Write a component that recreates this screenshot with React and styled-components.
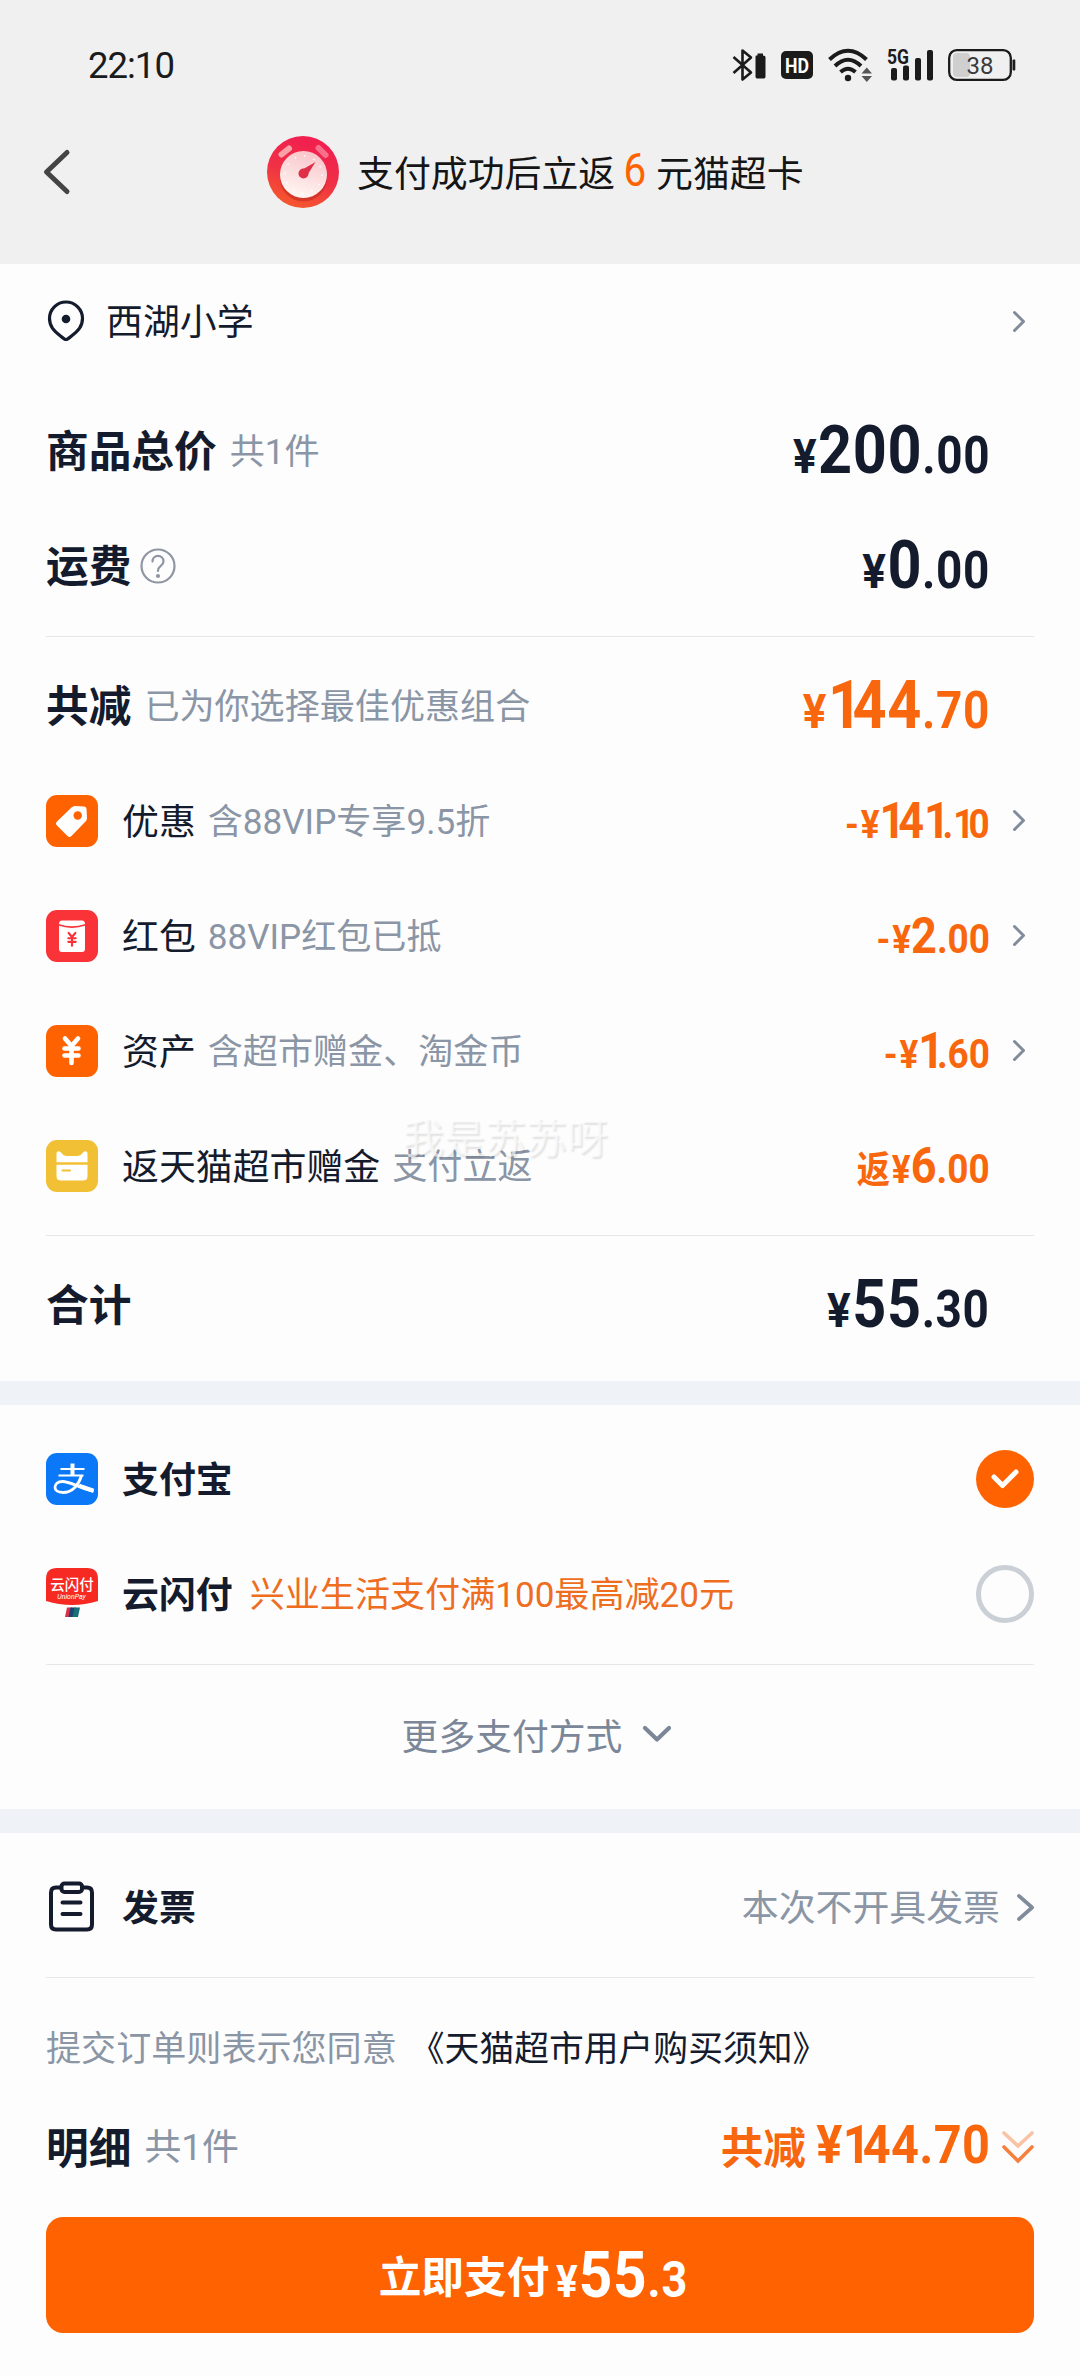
import React from "react";
import styled, { createGlobalStyle } from "styled-components";

const C = {
  ink: "#141b2d",
  grey: "#8a95a5",
  orange: "#f8670d",
  brand: "#ff6200",
  line: "#e6e7ea",
  band: "#eff3f7",
};

const GlobalStyle = createGlobalStyle`
  * { box-sizing: border-box; }
  body {
    margin: 0;
    background: #fdfdfd;
    font-family: Roboto, "Noto Sans CJK SC", sans-serif;
    color: ${C.ink};
  }
  svg { display: block; flex: none; overflow: visible; }
`;

const Page = styled.div`
  position: relative;
  width: 1080px;
  height: 2376px;
  overflow: hidden;
  background: #fdfdfd;
`;

const Header = styled.header`
  height: 264px;
  background: #f0f0f1;
`;

const StatusBar = styled.div`
  display: flex;
  align-items: center;
  justify-content: space-between;
  height: 128px;
  padding: 2px 64px 0 88px;
`;

const Clock = styled.div`
  font-size: 36.5px;
  letter-spacing: -1px;
  color: #1b1b1b;
  line-height: 40px;
  padding-top: 1px;
`;

const StatusIcons = styled.div`
  display: flex;
  align-items: center;
  gap: 15px;
`;

const TitleBar = styled.div`
  display: flex;
  align-items: center;
  height: 88px;
  padding-left: 42px;
`;

const TitleContent = styled.div`
  display: flex;
  align-items: center;
  margin-left: 196px;
  gap: 18px;
`;

const TitleText = styled.div`
  font-size: 36.9px;
  line-height: 60px;
  color: #151515;
  white-space: nowrap;
  padding-top: 6px;
`;

const TitleNumber = styled.span`
  display: inline-block;
  font-size: 46px;
  font-weight: 400;
  line-height: 40px;
  color: ${C.brand};
  transform: scaleX(0.88) translateY(-1px);
  margin: 0 8px 0 7px;
`;

const Section = styled.section`
  padding: ${(p) => p.$pad || "0"} 46px 0;
  height: ${(p) => p.$height}px;
`;

const Band = styled.div`
  height: 24px;
  background: ${C.band};
`;

const Divider = styled.hr`
  height: 1px;
  margin: ${(p) => p.$gap || "0"};
  border: 0;
  background: ${C.line};
`;

const AddressRow = styled.div`
  display: flex;
  align-items: center;
  height: 114px;
  margin-bottom: 15px;
`;

const Row = styled.div`
  display: flex;
  align-items: center;
  height: ${(p) => p.$height || 115}px;
  padding-top: ${(p) => p.$drop || 0}px;
`;

const IconBox = styled.div`
  flex: none;
  width: ${(p) => p.$width || 76}px;
`;

const HelpBox = styled.div`
  flex: none;
  padding-left: 9px;
`;

const Label = styled.span`
  font-size: ${(p) => (p.$big ? 42.7 : 36.9)}px;
  font-weight: ${(p) => (p.$bold ? 700 : 400)};
  line-height: 52px;
  padding-top: ${(p) => (p.$big ? 3 : 4)}px;
  color: ${(p) => p.$color || C.ink};
  white-space: nowrap;
`;

const Note = styled.span`
  font-size: ${(p) => p.$size || 35.1}px;
  line-height: 52px;
  padding-top: 2px;
  margin-left: ${(p) => p.$gap ?? 13}px;
  color: ${(p) => p.$color || C.grey};
  white-space: nowrap;
`;

const Spacer = styled.div`
  flex: 1;
`;

const AmountBox = styled.div`
  display: flex;
  flex: none;
  justify-content: ${(p) => (p.$start ? "flex-start" : "flex-end")};
  width: ${(p) => (p.$width ? `${p.$width}px` : "auto")};
  padding-left: ${(p) => p.$inset || 0}px;
  margin-top: ${(p) => p.$lift || 0}px;
`;

const Amount = styled.div`
  flex: none;
  font-size: ${(p) => p.$size}px;
  font-weight: 700;
  line-height: 60px;
  letter-spacing: ${(p) => p.$tracking || 0}px;
  color: ${(p) => p.$color || C.ink};
  white-space: nowrap;
  transform: scaleX(0.9);
  transform-origin: ${(p) => (p.$start ? "left" : "right")} center;
`;

const Part = styled.span`
  font-size: ${(p) => p.$size}px;
  line-height: 1;
  margin-right: ${(p) => p.$gap || 0}px;
`;

const NarrowOne = styled.span`
  letter-spacing: -0.16em;
`;

const Trailing = styled.div`
  flex: none;
  display: flex;
  justify-content: flex-end;
  width: ${(p) => p.$width || 44}px;
  padding-right: ${(p) => p.$inset ?? 9}px;
`;

const Radio = styled.div`
  display: grid;
  place-items: center;
  width: 58px;
  height: 58px;
  border-radius: 50%;
  border: ${(p) => (p.$checked ? "0" : "5px solid #cbd0d7")};
  background: ${(p) => (p.$checked ? C.brand : "transparent")};
`;

const More = styled.div`
  display: flex;
  align-items: center;
  justify-content: center;
  gap: 20px;
  height: 138px;
  padding-right: 6px;
  font-size: 36.8px;
  color: #7b8798;
`;

const PayButton = styled.button`
  display: flex;
  align-items: center;
  justify-content: center;
  width: 100%;
  height: 116px;
  margin-top: 41px;
  padding: 2px 0 0;
  border: 0;
  border-radius: 17px;
  background: ${C.brand};
  color: #fff;
  font-family: inherit;
`;

const Watermark = styled.div`
  position: absolute;
  left: 403px;
  top: 1109px;
  font-size: 41px;
  line-height: 60px;
  color: rgba(255, 255, 255, 0.65);
  text-shadow: 1.5px 1.5px 2px rgba(0, 0, 0, 0.11);
`;

function Chevron({ w = 12, h = 21, stroke = 3, color = "#808b9b" }) {
  const s = stroke / 2;
  return (
    <svg width={w} height={h} viewBox={`0 0 ${w} ${h}`} fill="none">
      <path d={`M${s} ${s}L${w - s} ${h / 2}L${s} ${h - s}`} stroke={color} strokeWidth={stroke} strokeLinecap="round" strokeLinejoin="round" />
    </svg>
  );
}

const BackArrow = () => (
  <svg width="29" height="46" viewBox="0 0 29 46" fill="none">
    <path d="M25 3.500L4.500 23L25 42.500" stroke="#444" strokeWidth="5" strokeLinecap="round" strokeLinejoin="round" />
  </svg>
);

function Tile({ color, children }) {
  return (
    <svg width="52" height="52" viewBox="0 0 52 52">
      <rect width="52" height="52" rx="11" fill={color} />
      {children}
    </svg>
  );
}

const Yuan = ({ x, y, s, w, color }) => (
  <g transform={`translate(${x} ${y}) scale(${s})`} stroke={color} strokeWidth={w} strokeLinecap="round" strokeLinejoin="round" fill="none">
    <path d="M-6.500-11.500L0-4L6.500-11.500M0-4V13M-7-1.500H7M-7 5.500H7" />
  </g>
);

const TagIcon = () => (
  <Tile color={C.brand}>
    <path d="M25.500 12.500Q27 11 29 11L38 11.500Q40.500 11.500 40.500 14L41 23Q41 25 39.500 26.500L25.500 41Q23.500 43 21.500 41L11 30.500Q9 28.500 11 26.500Z" fill="#fff" />
    <circle cx="31.700" cy="20.500" r="4.200" fill={C.brand} />
  </Tile>
);

const RedPacketIcon = () => (
  <Tile color="#fa3338">
    <path d="M13 14Q13 10.500 16 10.500H36Q39 10.500 39 14V38.500Q39 42 36 42H16Q13 42 13 38.500Z" fill="#fff" />
    <path d="M12.500 14.800Q26 19.500 39.500 14.800" stroke="#fa3338" strokeWidth="1.600" fill="none" />
    <Yuan x={26} y={29} s={0.52} w={4.2} color="#fa3338" />
  </Tile>
);

const AssetIcon = () => (
  <Tile color={C.brand}>
    <Yuan x={25.5} y={25} s={1} w={4.6} color="#fff" />
  </Tile>
);

const CatCardIcon = () => (
  <Tile color="#f2c035">
    <path d="M10.500 22.300V14C10.500 10.500 13 10.500 15 12.500Q17.500 16 20 16H32Q34.500 16 37 12.500C39 10.500 41.500 10.500 41.500 14V22.300Z" fill="#fff" />
    <path d="M10.500 24.700H41.500V36Q41.500 40.500 37 40.500H15Q10.500 40.500 10.500 36Z" fill="#fff" />
    <path d="M16.500 30.500H24" stroke="#f2c035" strokeWidth="2.200" strokeLinecap="round" />
  </Tile>
);

const AlipayIcon = () => (
  <Tile color="#0b78f8">
    <g fill="none" stroke="#fff">
      <path d="M14.500 16H38.500M12.500 22.500H37.500" strokeWidth="2.200" />
      <path d="M26.500 10.500V22.500" strokeWidth="4" />
      <path d="M35.500 22.500C33 31 27 39.500 17 39.500C11.500 39.500 9 37 9 34.500C9 31 12 28.500 16.500 28.500C24 28.500 30 33.500 47.500 38.500" strokeWidth="2.800" />
      <path d="M33 32.800L47.500 37.700" strokeWidth="4.200" />
    </g>
  </Tile>
);

const UnionPayIcon = () => (
  <svg width="52" height="52" viewBox="0 0 52 52">
    <path d="M0 11Q0 0 11 0H41Q52 0 52 11V33Q26 41 0 33Z" fill="#f62a22" />
    <text x="26" y="22" textAnchor="middle" fontSize="14.500" fontWeight="500" fill="#fff">云闪付</text>
    <text x="25.500" y="31" textAnchor="middle" fontSize="7" fontStyle="italic" fill="#fff">UnionPay</text>
    <path d="M21 39.500H26.500L24.500 49H19Z" fill="#d8304a" />
    <path d="M24.500 39.500H30L28 49H22.500Z" fill="#1c4470" />
    <path d="M28.500 39.500H34L32 49H26.500Z" fill="#177077" />
  </svg>
);

const ClipboardIcon = () => (
  <svg width="52" height="52" viewBox="0 0 52 52" fill="none" stroke={C.ink} strokeWidth="4" strokeLinecap="round" strokeLinejoin="round">
    <path d="M14 6.500H10Q5 6.500 5 11.500V43.500Q5 48.500 10 48.500H41Q46 48.500 46 43.500V11.500Q46 6.500 41 6.500H37" />
    <rect x="15.500" y="2.500" width="20.500" height="8.500" rx="3" />
    <path d="M16.500 21.500H34.500M16.500 33H34.500" />
  </svg>
);

const PinIcon = () => (
  <svg width="40" height="42" viewBox="0 0 40 42">
    <path d="M20 39.500Q18.500 39.500 14.500 36C8 31 3.500 26.500 3.500 18.500A16.500 16.500 0 0 1 36.500 18.500C36.500 26.500 32 31 25.500 36Q21.500 39.500 20 39.500Z" fill="none" stroke={C.ink} strokeWidth="3.200" />
    <circle cx="20" cy="19" r="4.300" fill={C.ink} />
  </svg>
);

const HelpIcon = () => (
  <svg width="36" height="36" viewBox="0 0 36 36" fill="none" stroke="#8f96a2" strokeWidth="2.200" strokeLinecap="round">
    <circle cx="18" cy="18" r="16.500" />
    <path d="M12.500 13.500C12.500 6 23.500 6 23.500 13.500C23.500 18 18 17.500 18 23" />
    <circle cx="18" cy="28" r="1" fill="#8f96a2" />
  </svg>
);

const TimerBadge = () => (
  <svg width="72" height="72" viewBox="0 0 72 72">
    <defs>
      <linearGradient id="ring" x1="0.650" y1="0.100" x2="0.350" y2="1">
        <stop offset="0" stopColor="#f0204f" />
        <stop offset="0.500" stopColor="#f03145" />
        <stop offset="1" stopColor="#f5592c" />
      </linearGradient>
      <linearGradient id="dial" x1="0.700" y1="0" x2="0.400" y2="1">
        <stop offset="0" stopColor="#f9c3c9" />
        <stop offset="1" stopColor="#fff7f3" />
      </linearGradient>
    </defs>
    <circle cx="36" cy="36" r="36" fill="url(#ring)" />
    <circle cx="36.500" cy="42" r="23.500" fill="#b82318" opacity="0.500" />
    <circle cx="36.500" cy="38.500" r="23.500" fill="url(#dial)" />
    <circle cx="36.500" cy="38.500" r="18.500" fill="none" stroke="#fff" strokeWidth="1.500" strokeDasharray="1.500 8.200" />
    <path d="M14.500 18.500L22 12.500" stroke="#fba1a8" strokeWidth="6" strokeLinecap="round" />
    <path d="M51.500 12L58.500 19" stroke="#f8708a" strokeWidth="6" strokeLinecap="round" />
    <circle cx="36.500" cy="37.500" r="5" fill="#e03048" />
    <path d="M48.500 26L41 38L35.500 33.500Z" fill="#e03048" />
  </svg>
);

const BluetoothIcon = () => (
  <svg width="34" height="34" viewBox="0 0 34 34" fill="none" stroke="#1b1b1b" strokeWidth="2.600">
    <path d="M1.500 9L19 24.500L10.500 31.500V2.500L19 9.500L1.500 25" strokeLinejoin="round" />
    <path d="M24 7.500H25.500V5.500H31V7.500Q33.500 7.500 33.500 9V28.500Q33.500 30.500 32 30.500H25Q23.500 30.500 23.500 28.500V9Q23.500 7.500 24 7.500Z" fill="#1b1b1b" stroke="none" />
  </svg>
);

const HdIcon = () => (
  <svg width="32" height="28" viewBox="0 0 32 28">
    <rect width="32" height="28" rx="5" fill="#1b1b1b" />
    <text x="16" y="21.500" textAnchor="middle" fontSize="21" fontWeight="700" textLength="24" lengthAdjust="spacingAndGlyphs" fill="#fff">HD</text>
  </svg>
);

const WifiIcon = () => (
  <svg width="44" height="34" viewBox="0 0 44 34" fill="none" stroke="#1b1b1b" strokeWidth="4">
    <path d="M1.500 11.500Q20 -6 38.500 11.500M7 18Q20 5.500 33 18M12.500 24Q20 17.500 27.500 24" />
    <circle cx="20" cy="30" r="3.200" fill="#1b1b1b" stroke="none" />
    <path d="M33.500 25.500L38.800 19.500L44 25.500ZM33.500 28L38.800 34L44 28Z" fill="#555" stroke="none" />
  </svg>
);

const SignalIcon = () => (
  <svg width="46" height="34" viewBox="0 0 46 34" fill="#1b1b1b">
    <text x="0" y="16" fontSize="20" fontWeight="700" textLength="22" lengthAdjust="spacingAndGlyphs">5G</text>
    <rect x="4" y="20" width="6" height="12.500" rx="2" />
    <rect x="16" y="17.500" width="6" height="15" rx="2" />
    <rect x="28" y="10" width="6" height="22.500" rx="2" />
    <rect x="40" y="2" width="6" height="30.500" rx="2" />
  </svg>
);

const BatteryIcon = () => (
  <svg width="68" height="32" viewBox="0 0 68 32">
    <rect x="5" y="4" width="17" height="24" rx="4" fill="#cfcfcf" />
    <rect x="1.200" y="1.200" width="61.600" height="29.600" rx="7.500" fill="none" stroke="#1b1b1b" strokeWidth="2.300" />
    <rect x="64.500" y="10.500" width="2.800" height="11" rx="1" fill="#1b1b1b" />
    <text x="32" y="24.500" textAnchor="middle" fontSize="24" fill="#3a3a3a">38</text>
  </svg>
);

const DoubleDown = () => (
  <svg width="32" height="34" viewBox="0 0 32 34" fill="none" strokeWidth="3.600" strokeLinecap="round">
    <path d="M2 3L16 16L30 3" stroke="#fbc3a5" />
    <path d="M2 17L16 31L30 17" stroke="#f5803f" />
  </svg>
);

/* The digit 1 is set tighter than the tabular width of the other digits. */
function Digits({ children }) {
  return children.split(/(1)/).map((part, i) => (part === "1" ? <NarrowOne key={i}>1</NarrowOne> : part));
}

function BigPrice({ whole, cents, color }) {
  return (
    <AmountBox>
      <Amount $size={66} $tracking={0.7} $color={color}>
        <Part $size={49} $gap={1}>¥</Part>
        <Digits>{whole}</Digits>
        <Part $size={51}><Digits>{`.${cents}`}</Digits></Part>
      </Amount>
    </AmountBox>
  );
}

function SmallPrice({ prefix, whole, cents }) {
  return (
    <AmountBox>
      <Amount $size={50} $color={C.orange}>
        <Part $size={prefix === "返" ? 37 : 39} $gap={2}>{prefix}</Part>
        <Part $size={39}>¥</Part>
        <Digits>{whole}</Digits>
        <Part $size={41}><Digits>{`.${cents}`}</Digits></Part>
      </Amount>
    </AmountBox>
  );
}

const savings = [
  { icon: <TagIcon />, label: "优惠", note: "含88VIP专享9.5折", prefix: "-", whole: "141", cents: "10", link: true },
  { icon: <RedPacketIcon />, label: "红包", note: "88VIP红包已抵", prefix: "-", whole: "2", cents: "00", link: true },
  { icon: <AssetIcon />, label: "资产", note: "含超市赠金、淘金币", prefix: "-", whole: "1", cents: "60", link: true },
  { icon: <CatCardIcon />, label: "返天猫超市赠金", note: "支付立返", prefix: "返", whole: "6", cents: "00", link: false },
];

export default function App() {
  return (
    <Page>
      <GlobalStyle />
      <Header>
        <StatusBar>
          <Clock>22:10</Clock>
          <StatusIcons>
            <BluetoothIcon />
            <HdIcon />
            <WifiIcon />
            <SignalIcon />
            <BatteryIcon />
          </StatusIcons>
        </StatusBar>
        <TitleBar>
          <BackArrow />
          <TitleContent>
            <TimerBadge />
            <TitleText>
              支付成功后立返<TitleNumber>6</TitleNumber>元猫超卡
            </TitleText>
          </TitleContent>
        </TitleBar>
      </Header>

      <Section $height={1117}>
        <AddressRow>
          <IconBox $width={60}><PinIcon /></IconBox>
          <Label>西湖小学</Label>
          <Spacer />
          <Trailing><Chevron /></Trailing>
        </AddressRow>
        <Row>
          <Label $big $bold>商品总价</Label>
          <Note>共1件</Note>
          <Spacer />
          <BigPrice whole="200" cents="00" />
          <Trailing />
        </Row>
        <Row>
          <Label $big $bold>运费</Label>
          <HelpBox><HelpIcon /></HelpBox>
          <Spacer />
          <BigPrice whole="0" cents="00" />
          <Trailing />
        </Row>
        <Divider $gap="13px 0 11px" />
        <Row>
          <Label $big $bold>共减</Label>
          <Note>已为你选择最佳优惠组合</Note>
          <Spacer />
          <BigPrice whole="144" cents="70" color={C.orange} />
          <Trailing />
        </Row>
        {savings.map((s) => (
          <Row key={s.label}>
            <IconBox>{s.icon}</IconBox>
            <Label>{s.label}</Label>
            <Note $gap={12}>{s.note}</Note>
            <Spacer />
            <SmallPrice prefix={s.prefix} whole={s.whole} cents={s.cents} />
            <Trailing>{s.link && <Chevron />}</Trailing>
          </Row>
        ))}
        <Divider $gap="12px 0 11px" />
        <Row>
          <Label $big $bold>合计</Label>
          <Spacer />
          <BigPrice whole="55" cents="30" />
          <Trailing />
        </Row>
      </Section>

      <Band />

      <Section $height={404} $pad="16px">
        <Row>
          <IconBox><AlipayIcon /></IconBox>
          <Label $bold>支付宝</Label>
          <Spacer />
          <Radio $checked>
            <svg width="28" height="20" viewBox="0 0 28 20" fill="none">
              <path d="M3 8L11.500 16.500L25 3" stroke="#fff" strokeWidth="5" strokeLinecap="round" strokeLinejoin="round" />
            </svg>
          </Radio>
        </Row>
        <Row>
          <IconBox><UnionPayIcon /></IconBox>
          <Label $bold>云闪付</Label>
          <Note $color="#ee6d1f" $gap={17}>兴业生活支付满100最高减20元</Note>
          <Spacer />
          <Radio />
        </Row>
        <Divider $gap="13px 0 0" />
        <More>
          更多支付方式
          <svg width="30" height="18" viewBox="0 0 30 18" fill="none">
            <path d="M3 3L15 14.500L27 3" stroke="#7b8798" strokeWidth="4.200" strokeLinecap="round" strokeLinejoin="round" />
          </svg>
        </More>
      </Section>

      <Band />

      <Section $height={543}>
        <Row $height={144} $drop={4}>
          <IconBox><ClipboardIcon /></IconBox>
          <Label $bold>发票</Label>
          <Spacer />
          <Label $color={C.grey}>本次不开具发票</Label>
          <Trailing $width={34} $inset={0}><Chevron w={17} h={27} stroke={3.8} /></Trailing>
        </Row>
        <Divider />
        <Row $height={140}>
          <Note $gap={0}>提交订单则表示您同意</Note>
          <Note $size={34.8} $gap={13} $color={C.ink}>《天猫超市用户购买须知》</Note>
        </Row>
        <Row $height={58}>
          <Label $big $bold>明细</Label>
          <Note $size={36.9}>共1件</Note>
          <Spacer />
          <Label $big $bold $color={C.orange}>共减</Label>
          <AmountBox $width={184} $lift={-4}>
            <Amount $size={54} $tracking={0.4} $color={C.orange}><Digits>¥144.70</Digits></Amount>
          </AmountBox>
          <Trailing $inset={0}><DoubleDown /></Trailing>
        </Row>
        <PayButton>
          <Label $big $bold $color="#fff">立即支付</Label>
          <AmountBox $start $width={152} $inset={7} $lift={-2}>
            <Amount $start $size={65} $tracking={1} $color="#fff">
              <Part $size={45}>¥</Part>55<Part $size={50}>.3</Part>
            </Amount>
          </AmountBox>
        </PayButton>
      </Section>

      <Watermark>我是苏苏呀</Watermark>
    </Page>
  );
}
